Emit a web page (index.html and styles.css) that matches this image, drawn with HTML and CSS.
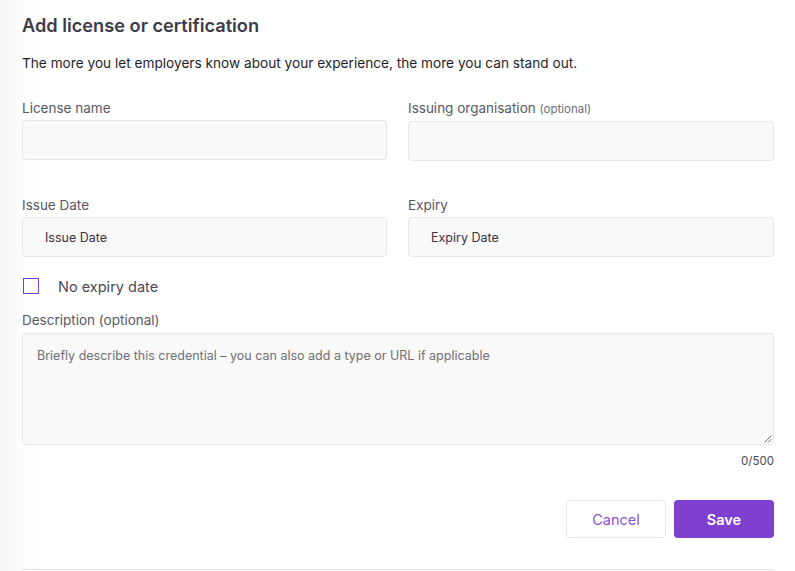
FILE: index.html
```html
<!DOCTYPE html>
<html lang="en">
<head>
<meta charset="utf-8">
<title>Add license or certification</title>
<link rel="stylesheet" href="styles.css">
</head>
<body>
<main class="panel">
  <h1 class="title">Add license or certification</h1>
  <p class="intro">The more you let employers know about your experience, the more you can stand out.</p>

  <div class="grid">
    <div class="field">
      <label class="label">License name</label>
      <div class="input"></div>
    </div>
    <div class="field">
      <label class="label">Issuing organisation <span class="opt">(optional)</span></label>
      <div class="input"></div>
    </div>
  </div>

  <div class="grid grid-dates">
    <div class="field">
      <label class="label">Issue Date</label>
      <div class="input date">Issue Date</div>
    </div>
    <div class="field">
      <label class="label">Expiry</label>
      <div class="input date">Expiry Date</div>
    </div>
  </div>

  <div class="check-row">
    <span class="checkbox"></span>
    <span class="check-label">No expiry date</span>
  </div>

  <div class="field desc">
    <label class="label">Description (optional)</label>
    <div class="textarea">
      <span class="placeholder">Briefly describe this credential – you can also add a type or URL if applicable</span>
      <svg class="grip" width="9" height="9" viewBox="0 0 9 9"><path d="M8.5 1.5 L1.5 8.5 M8.5 5 L5 8.5" stroke="#777" stroke-width="1" fill="none"/></svg>
    </div>
    <div class="counter">0/500</div>
  </div>

  <div class="actions">
    <button class="btn btn-cancel">Cancel</button>
    <button class="btn btn-save">Save</button>
  </div>

  <div class="divider"></div>
</main>
</body>
</html>
```

FILE: styles.css
```css
* { box-sizing: border-box; }

html, body {
  margin: 0;
  height: 100%;
}

body {
  background: linear-gradient(90deg, #f6f6f6 0px, #fcfcfc 20px, #ffffff 45px);
  font-family: Inter, "Noto Sans", sans-serif;
  color: #4a4a58;
  overflow: hidden;
}

.panel {
  padding: 13px 21px 0 22px;
}

.title {
  margin: 0;
  font-size: 18.2px;
  line-height: 24px;
  font-weight: 600;
  color: #3b3b4a;
}

.intro {
  margin: 16px 0 0;
  font-size: 13.65px;
  line-height: 20px;
  color: #1e1e2c;
}

.grid {
  display: grid;
  grid-template-columns: 365fr 366fr;
  column-gap: 21px;
  margin-top: 25px;
}

.grid-dates {
  margin-top: 34px;
}

.label {
  display: block;
  font-size: 13.5px;
  line-height: 20px;
  color: #575766;
  margin-bottom: 2px;
}

.opt {
  font-size: 11.5px;
  color: #6e6e7c;
}

.input {
  height: 40px;
  border: 1px solid #e6e6e6;
  border-radius: 4px;
  background: #f9f9f9;
}

.input.date {
  display: flex;
  align-items: center;
  padding-left: 22px;
  font-size: 12.5px;
  color: #3a3046;
}

.check-row {
  display: flex;
  align-items: center;
  height: 24px;
  margin-top: 17px;
}

.checkbox {
  width: 16px;
  height: 16px;
  border: 1.5px solid #7b3fcf;
  margin-left: 1px;
}

.check-label {
  margin-left: 19px;
  font-size: 14.5px;
  color: #4a4a5a;
}

.desc {
  margin-top: 12px;
}

.desc .label {
  margin-bottom: 3px;
}

.textarea {
  position: relative;
  height: 112px;
  border: 1px solid #e6e6e6;
  border-radius: 4px;
  background: #f9f9f9;
  padding: 10px 14px;
}

.placeholder {
  font-size: 12.5px;
  line-height: 18px;
  color: #6f6f78;
}

.grip {
  position: absolute;
  right: 1px;
  bottom: 1px;
}

.counter {
  margin-top: 8px;
  text-align: right;
  font-size: 11.5px;
  line-height: 16px;
  color: #4a4a58;
}

.actions {
  display: flex;
  justify-content: flex-end;
  gap: 8px;
  margin-top: 31px;
}

.btn {
  width: 100px;
  height: 38px;
  border-radius: 4px;
  font-family: inherit;
  font-size: 14.5px;
  cursor: pointer;
}

.btn-cancel {
  background: #fff;
  border: 1px solid #e8e8e8;
  color: #8a52d6;
}

.btn-save {
  background: #7f3fcf;
  border: none;
  color: #fff;
  font-weight: 600;
}

.divider {
  margin-top: 31px;
  height: 1px;
  background: #e4e4e4;
}
```
